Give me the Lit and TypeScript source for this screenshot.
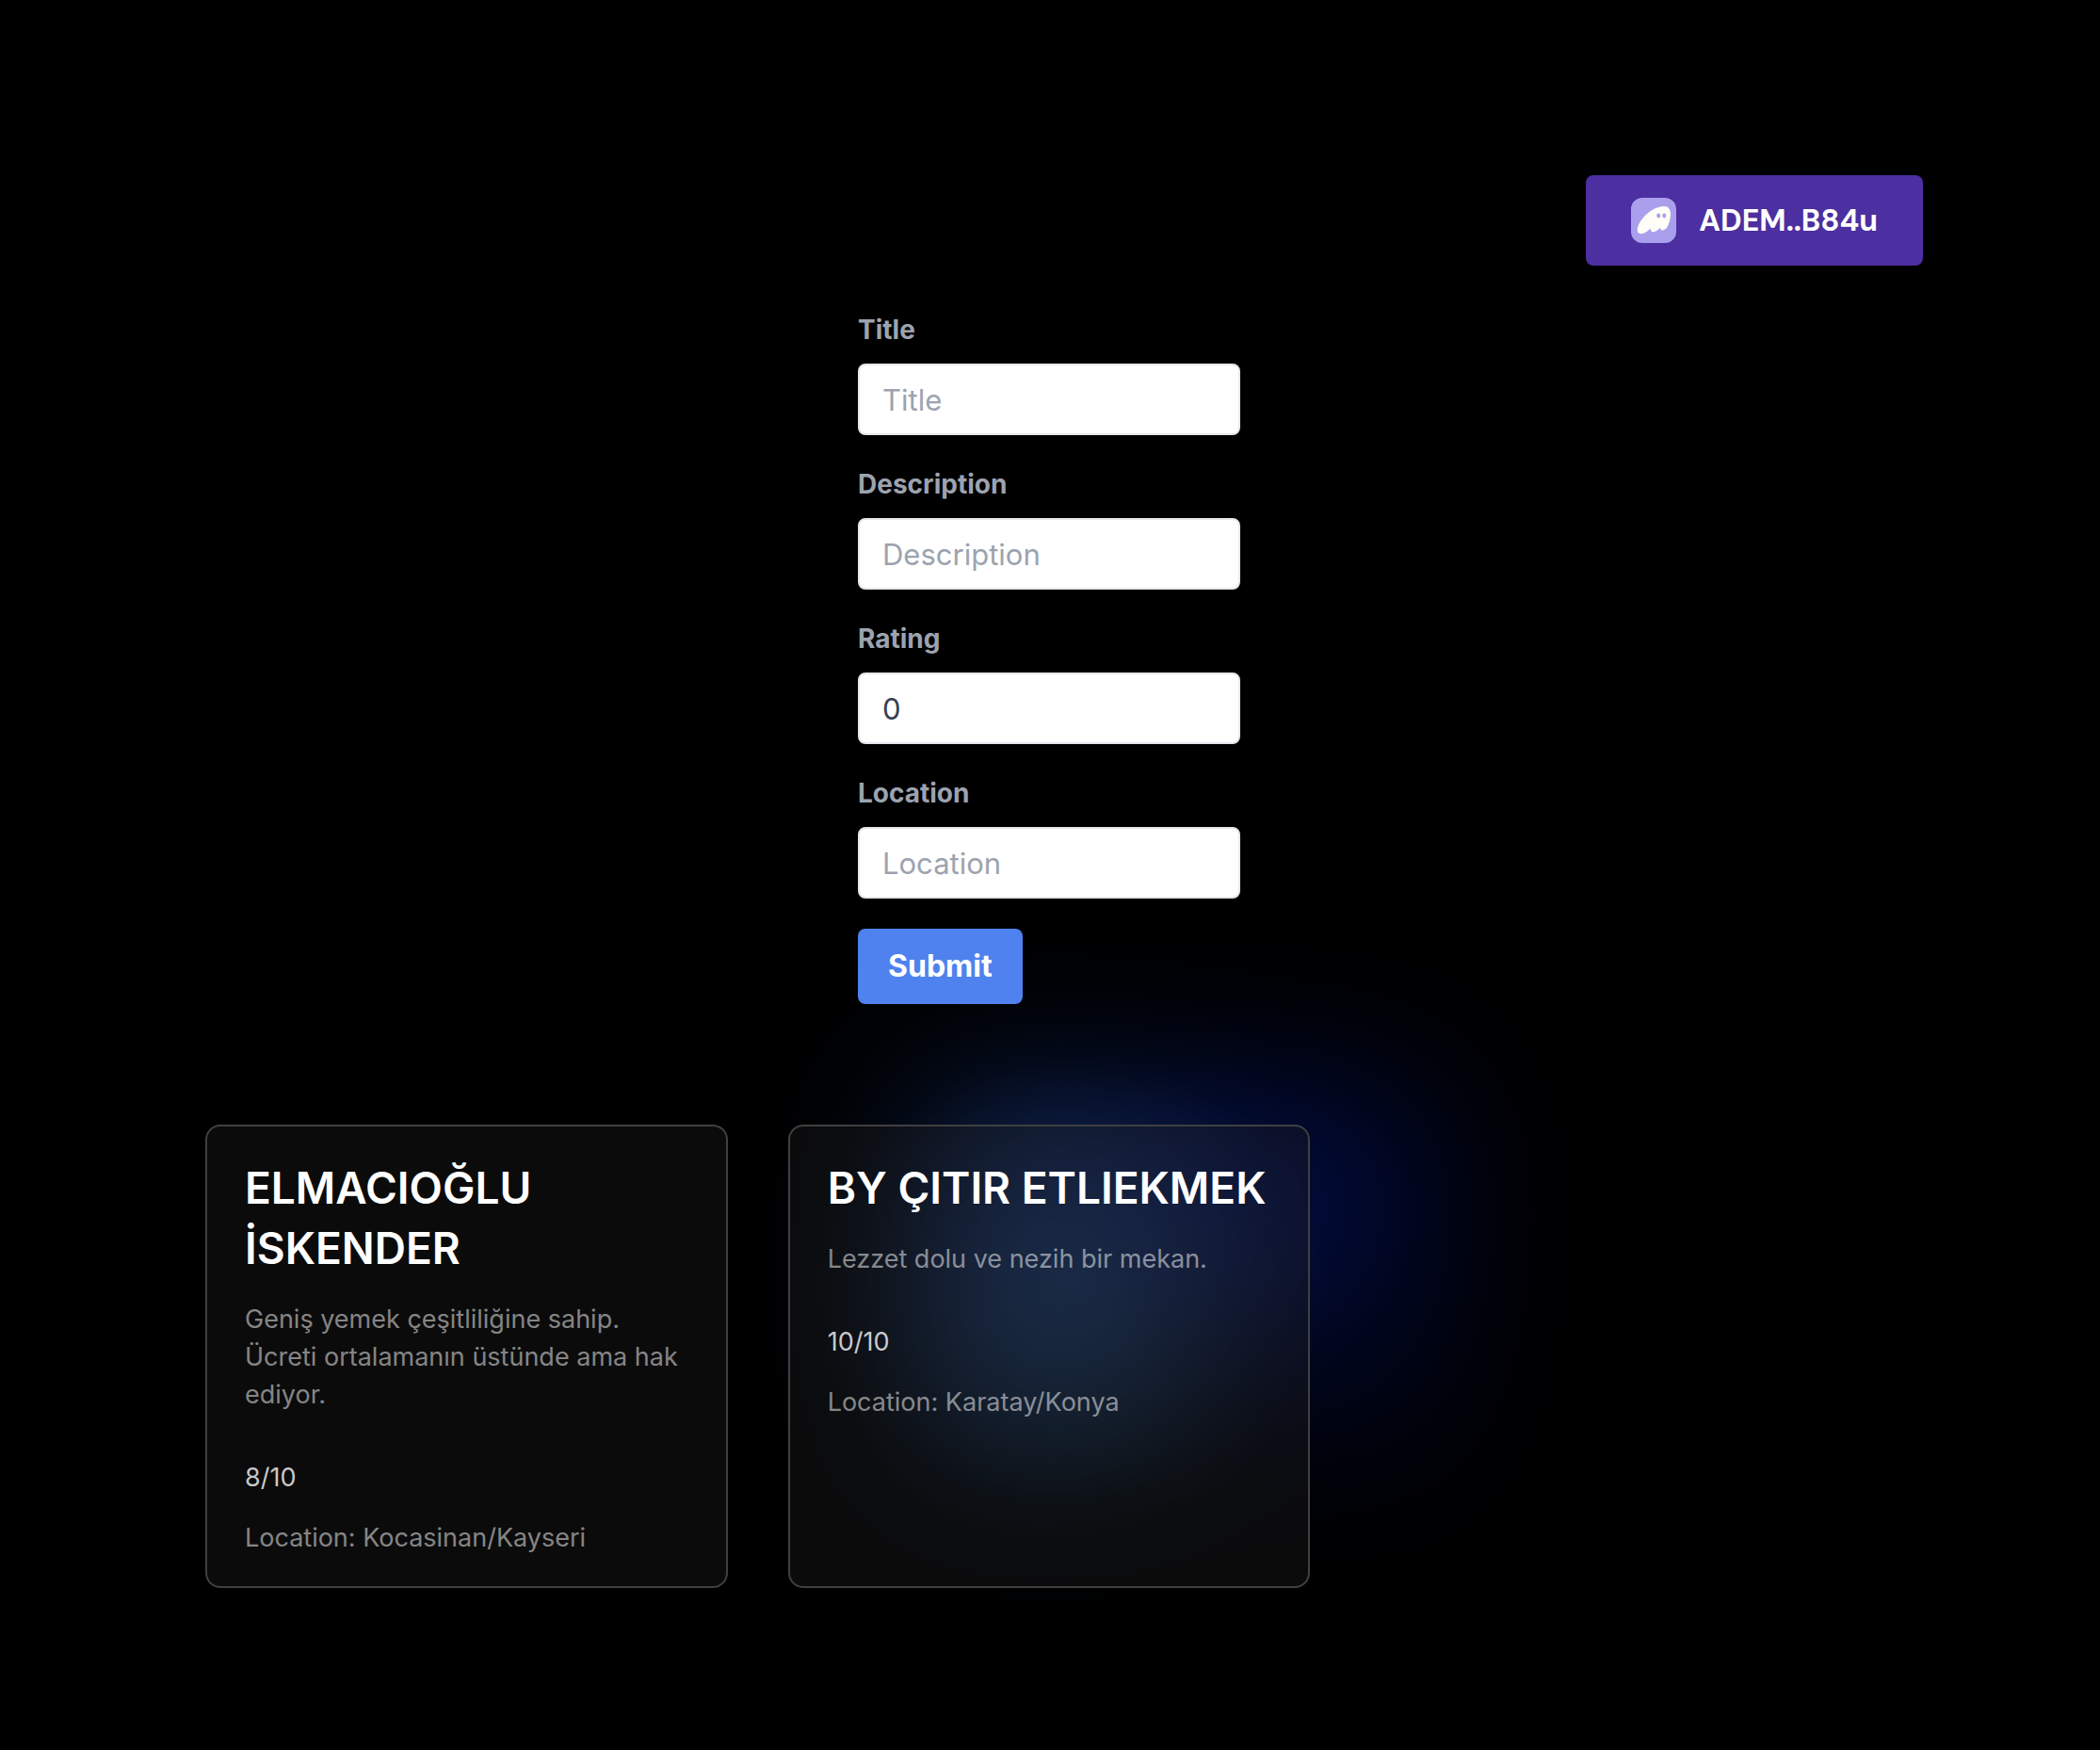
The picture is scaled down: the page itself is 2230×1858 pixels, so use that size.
import { LitElement, html, css } from "lit";
import { customElement, property, state } from "lit/decorators.js";

interface Review {
  title: string;
  description: string;
  rating: number;
  location: string;
}

@customElement("wallet-button")
export class WalletButton extends LitElement {
  @property() address = "";

  static styles = css`
    :host {
      display: block;
    }
    .wallet {
      display: flex;
      align-items: center;
      gap: 24px;
      height: 96px;
      padding: 0 48px;
      border: 0;
      border-radius: 8px;
      background: #4c2fa0;
      color: #fff;
      font: 700 32px/48px "DM Sans", Inter, "Liberation Sans", sans-serif;
      cursor: pointer;
    }
    .icon {
      display: block;
      width: 48px;
      height: 48px;
    }
  `;

  render() {
    return html`
      <button class="wallet" type="button">
        <svg class="icon" viewBox="0 0 48 48" aria-hidden="true">
          <rect width="48" height="48" rx="12" fill="#aa9fec" />
          <path
            fill="#fffdf8"
            d="M6.7 33.6C7.2 28.6 10.6 23.4 15.4 18.6C21.4 12.6 28.8 9 35.2 9C39.6 9 42 12.2 42 17.2C42 22 40.6 27.4 38.4 31C37 33.4 34.8 34.6 33 34.4C31.6 34.2 31 33.2 30.8 31.6C29.4 34 26.2 36.4 23.6 36.3C21.6 36.2 20.8 34.8 20.4 32.6C17.8 36 14 38.2 10.8 38.2C7.8 38.2 6.4 36.6 6.7 33.6Z"
          />
          <ellipse cx="29.2" cy="19" rx="2" ry="2.4" fill="#aa9fec" />
          <ellipse cx="35.3" cy="19" rx="2" ry="2.4" fill="#aa9fec" />
        </svg>
        ${this.address}
      </button>
    `;
  }
}

@customElement("review-form")
export class ReviewForm extends LitElement {
  @state() private rating = "0";

  static styles = css`
    :host {
      display: block;
    }
    .form {
      display: flex;
      flex-direction: column;
      align-items: flex-start;
      gap: 32px;
    }
    .field {
      display: flex;
      flex-direction: column;
      gap: 16px;
      width: 100%;
    }
    .label {
      color: #9ca3af;
      font-size: 28px;
      font-weight: 700;
      line-height: 40px;
    }
    .input {
      box-sizing: border-box;
      width: 100%;
      height: 76px;
      margin: 0;
      padding: 16px 24px;
      border: 2px solid #e5e7eb;
      border-radius: 8px;
      background: #fff;
      color: #374151;
      font: inherit;
      font-size: 31px;
      line-height: 40px;
      appearance: none;
    }
    .input::placeholder {
      color: #9ca3af;
      opacity: 1;
    }
    .submit {
      height: 80px;
      padding: 0 32px;
      border: 0;
      border-radius: 8px;
      background: #4f82ee;
      color: #fff;
      font: inherit;
      font-size: 32px;
      font-weight: 700;
      line-height: 48px;
      cursor: pointer;
    }
  `;

  private onRating(event: Event) {
    this.rating = (event.target as HTMLInputElement).value;
  }

  render() {
    return html`
      <form class="form" @submit=${(e: Event) => e.preventDefault()}>
        <div class="field">
          <label class="label" for="title">Title</label>
          <input class="input" id="title" type="text" placeholder="Title" />
        </div>
        <div class="field">
          <label class="label" for="description">Description</label>
          <input class="input" id="description" type="text" placeholder="Description" />
        </div>
        <div class="field">
          <label class="label" for="rating">Rating</label>
          <input class="input" id="rating" type="number" .value=${this.rating} @input=${this.onRating} />
        </div>
        <div class="field">
          <label class="label" for="location">Location</label>
          <input class="input" id="location" type="text" placeholder="Location" />
        </div>
        <button class="submit" type="submit">Submit</button>
      </form>
    `;
  }
}

@customElement("review-card")
export class ReviewCard extends LitElement {
  @property({ attribute: false }) review!: Review;

  static styles = css`
    :host {
      display: grid;
    }
    .card {
      display: flex;
      flex-direction: column;
      gap: 24px;
      padding: 33px 40px 31px;
      border: 2px solid #404040;
      border-radius: 16px;
      background: rgba(38, 38, 38, 0.3);
      overflow-wrap: anywhere;
    }
    .title {
      margin: 0;
      color: #fff;
      font-size: 46px;
      font-weight: 600;
      line-height: 64px;
    }
    .text {
      margin: 0;
      color: rgba(255, 255, 255, 0.5);
      font-size: 27px;
      line-height: 40px;
    }
    .description {
      padding-bottom: 24px;
    }
    .rating {
      color: rgba(255, 255, 255, 0.78);
    }
  `;

  render() {
    const { title, description, rating, location } = this.review;
    return html`
      <article class="card">
        <h2 class="title">${title}</h2>
        <p class="text description">${description}</p>
        <p class="text rating">${rating}/10</p>
        <p class="text">Location: ${location}</p>
      </article>
    `;
  }
}

@customElement("app-root")
export class AppRoot extends LitElement {
  @state() private reviews: Review[] = [
    {
      title: "ELMACIOĞLU İSKENDER",
      description: "Geniş yemek çeşitliliğine sahip. Ücreti ortalamanın üstünde ama hak ediyor.",
      rating: 8,
      location: "Kocasinan/Kayseri",
    },
    {
      title: "BY ÇITIR ETLIEKMEK",
      description: "Lezzet dolu ve nezih bir mekan.",
      rating: 10,
      location: "Karatay/Konya",
    },
  ];

  static styles = css`
    :host {
      display: block;
      background: #000;
      font-family: Inter, "Liberation Sans", sans-serif;
    }
    .page {
      box-sizing: border-box;
      display: flex;
      flex-direction: column;
      align-items: center;
      min-height: 100vh;
      padding: 186px 188px 172px 186px;
      overflow: hidden;
    }
    .top {
      display: flex;
      justify-content: flex-end;
      width: 100%;
      margin-bottom: 48px;
    }
    .entry {
      z-index: 1;
      width: 100%;
      max-width: 406px;
      margin-bottom: 128px;
    }
    .reviews {
      position: relative;
      display: grid;
      grid-template-columns: repeat(3, minmax(0, 1fr));
      gap: 64px;
      width: 100%;
      max-width: 1792px;
    }
    .reviews::before,
    .reviews::after {
      content: "";
      position: absolute;
      left: 50%;
      pointer-events: none;
    }
    .reviews::before {
      top: 160px;
      width: 540px;
      height: 380px;
      background: conic-gradient(from 180deg at 50% 50%, #1f6496, #1d52dc 42%, #0626cc 58%, transparent);
      filter: blur(88px);
      opacity: 0.4;
      transform: translate(-25%, -50%);
    }
    .reviews::after {
      top: 170px;
      width: 560px;
      height: 480px;
      background: radial-gradient(closest-side, rgba(70, 90, 130, 0.2), rgba(70, 90, 130, 0.1) 50%, transparent);
      transform: translate(-46%, -50%);
    }
    .item {
      z-index: 1;
    }
  `;

  render() {
    return html`
      <main class="page">
        <header class="top">
          <wallet-button address="ADEM..B84u"></wallet-button>
        </header>
        <review-form class="entry"></review-form>
        <section class="reviews" aria-label="Reviews">
          ${this.reviews.map((review) => html`<review-card class="item" .review=${review}></review-card>`)}
        </section>
      </main>
    `;
  }
}
